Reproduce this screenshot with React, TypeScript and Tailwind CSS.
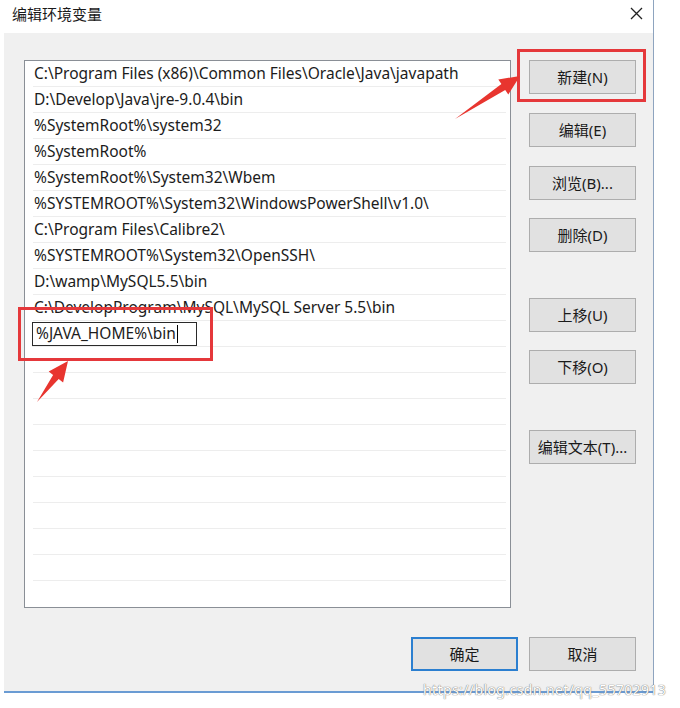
import * as React from "react";

const PATHS = [
  "C:\\Program Files (x86)\\Common Files\\Oracle\\Java\\javapath",
  "D:\\Develop\\Java\\jre-9.0.4\\bin",
  "%SystemRoot%\\system32",
  "%SystemRoot%",
  "%SystemRoot%\\System32\\Wbem",
  "%SYSTEMROOT%\\System32\\WindowsPowerShell\\v1.0\\",
  "C:\\Program Files\\Calibre2\\",
  "%SYSTEMROOT%\\System32\\OpenSSH\\",
  "D:\\wamp\\MySQL5.5\\bin",
  "C:\\DevelopProgram\\MySQL\\MySQL Server 5.5\\bin",
];

const EMPTY_ROWS = 10;

const FONT = {
  fontFamily: '"Noto Sans", "Noto Sans CJK SC", sans-serif',
};

function DlgButton({
  label,
  primary,
  className = "",
}: {
  label: string;
  primary?: boolean;
  className?: string;
}) {
  return (
    <button
      type="button"
      className={[
        "h-[34px] w-[107px] flex items-center justify-center text-[15px] text-[#1a1a1a]",
        "bg-[#e1e1e1]",
        primary ? "border-2 border-[#2b7fd0]" : "border border-[#adadad]",
        className,
      ].join(" ")}
    >
      {label}
    </button>
  );
}

export default function App() {
  return (
    <div
      className="relative w-[680px] h-[708px] bg-white overflow-hidden"
      style={FONT}
    >
      {/* dialog window */}
      <div className="ml-[4px] w-[650px] border-r border-[#8ea4bf]">
        <div className="h-[33px] flex items-center justify-between pl-[8px] pr-[10px] bg-white">
          <span className="text-[15px] text-[#1a1a1a] pb-[4px]">编辑环境变量</span>
          <svg width={13} height={13} viewBox="0 0 13 13" className="mb-[6px]" aria-hidden>
            <path d="M1 1 L12 12 M12 1 L1 12" stroke="#222" strokeWidth={1.3} />
          </svg>
        </div>

        <div className="h-[660px] bg-[#f0f0f0] border-b-2 border-[#6a9bd3] pt-[27px] pl-[20px]">
          <div className="flex">
            {/* list */}
            <div className="w-[487px] h-[548px] bg-white border border-[#8a8f96] flex flex-col">
              {PATHS.map((p) => (
                <div
                  key={p}
                  className="h-[26px] shrink-0 flex items-center pl-[1px] ml-[8px] mr-[4px] text-[15.5px] text-[#1c1c1c] border-b border-[#ededed] whitespace-nowrap"
                >
                  {p}
                </div>
              ))}
              <div className="h-[26px] shrink-0 flex items-center ml-[7px] mr-[4px] border-b border-[#ededed]">
                <div className="h-[24px] w-[165px] border border-[#2a2a2a] flex items-center pl-[3px] text-[15.5px] text-[#1c1c1c]">
                  %JAVA_HOME%\bin
                  <span className="ml-[1px] inline-block w-[1px] h-[18px] bg-black" />
                </div>
              </div>
              {Array.from({ length: EMPTY_ROWS }).map((_, i) => (
                <div
                  key={i}
                  className={[
                    "h-[26px] shrink-0 ml-[8px] mr-[4px]",
                    i < EMPTY_ROWS - 1 ? "border-b border-[#ededed]" : "",
                  ].join(" ")}
                />
              ))}
            </div>

            {/* side buttons */}
            <div className="ml-[18px] flex flex-col">
              <DlgButton label="新建(N)" />
              <DlgButton label="编辑(E)" className="mt-[19px]" />
              <DlgButton label="浏览(B)..." className="mt-[19px]" />
              <DlgButton label="删除(D)" className="mt-[18px]" />
              <DlgButton label="上移(U)" className="mt-[46px]" />
              <DlgButton label="下移(O)" className="mt-[18px]" />
              <DlgButton label="编辑文本(T)..." className="mt-[46px]" />
            </div>
          </div>

          <div className="w-[612px] mt-[29px] flex justify-end gap-[11px]">
            <DlgButton label="确定" primary />
            <DlgButton label="取消" />
          </div>
        </div>
      </div>

      {/* annotations drawn over the screenshot */}
      <div className="absolute left-[517px] top-[49px] w-[129px] h-[53px] border-[3px] border-[#e5383b] pointer-events-none" />
      <div className="absolute left-[18px] top-[307px] w-[195px] h-[54px] border-[3px] border-[#e5383b] pointer-events-none" />
      <svg
        className="absolute left-0 top-0 pointer-events-none"
        width={680}
        height={708}
        aria-hidden
      >
        <polygon
          points="455,119 501.4,84.1 498.3,79.5 520,76 508.3,94.5 505.2,89.9"
          fill="#e8352f"
        />
        <polygon
          points="37,402 53.1,374.9 48.7,371.6 68,361 63.1,382.4 58.7,379.1"
          fill="#e8352f"
        />
      </svg>

      {/* watermark */}
      <span
        className="absolute left-[423px] top-[679px] text-[14px] text-white tracking-[0.4px]"
        style={{ textShadow: "0 0 1px #777, 0 0 1px #777" }}
      >
        https://blog.csdn.net/qq_55702913
      </span>
    </div>
  );
}
